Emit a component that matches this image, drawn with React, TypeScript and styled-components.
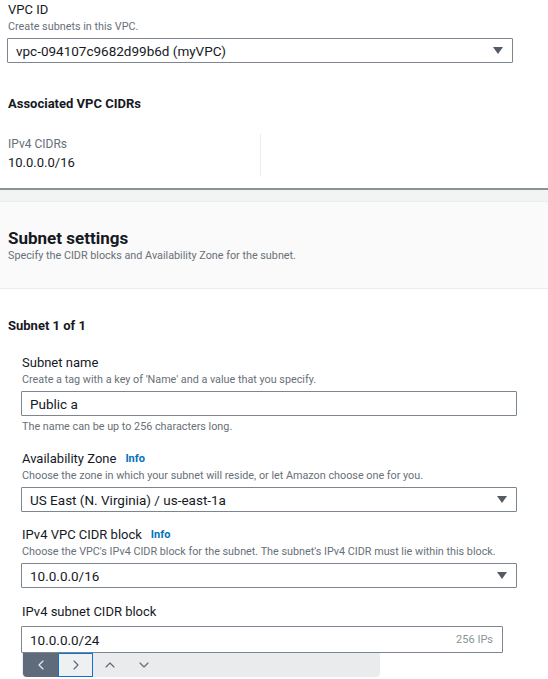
import React from "react";
import styled, { createGlobalStyle } from "styled-components";
import { ChevronLeft, ChevronRight, ChevronUp, ChevronDown } from "lucide-react";

const Global = createGlobalStyle`
  html, body { margin: 0; padding: 0; background: #ffffff; }
  body { font-family: Roboto, "Open Sans", sans-serif; color: #16191f; }
  * { box-sizing: border-box; }
`;

const Page = styled.div`
  width: 548px;
  display: flex;
  flex-direction: column;
`;

const TopSection = styled.section`
  padding: 1px 0 0 8px;
  display: flex;
  flex-direction: column;
`;

const Label = styled.div`
  font-size: 13px;
  line-height: 18px;
  font-weight: 400;
  color: #16191f;
  display: flex;
  align-items: center;
  gap: 9px;
`;

const InfoLink = styled.span`
  font-size: 11px;
  font-weight: 700;
  color: #0073bb;
`;

const Desc = styled.div<{ $top?: number }>`
  font-size: 10.8px;
  line-height: 16px;
  color: #687078;
  margin-top: ${(p) => p.$top ?? 0}px;
`;

const Box = styled.div<{ $width: number; $height: number; $top: number; $shift?: number }>`
  width: ${(p) => p.$width}px;
  height: ${(p) => p.$height}px;
  margin-top: ${(p) => p.$top}px;
  margin-left: ${(p) => p.$shift ?? 0}px;
  border: 1px solid #7d8590;
  border-radius: 1px;
  background: #ffffff;
  display: flex;
  align-items: center;
  justify-content: space-between;
  padding: 0 9px 0 8px;
  font-size: 13.5px;
  color: #16191f;
`;

const Caret = styled.span`
  width: 0;
  height: 0;
  border-left: 5px solid transparent;
  border-right: 5px solid transparent;
  border-top: 7px solid #545b64;
`;

const Hint = styled.span`
  font-size: 11px;
  color: #879596;
`;

const SubHeading = styled.div<{ $top: number }>`
  font-size: 13px;
  line-height: 18px;
  font-weight: 700;
  margin-top: ${(p) => p.$top}px;
`;

const CidrGrid = styled.div`
  display: grid;
  grid-template-columns: 253px 1fr;
  margin-top: 21px;
`;

const CidrCell = styled.div`
  border-right: 1px solid #eaeded;
  padding: 2px 0 4px 0;
  display: flex;
  flex-direction: column;
`;

const KeyLabel = styled.div`
  font-size: 12px;
  line-height: 16px;
  color: #687078;
`;

const Value = styled.div`
  font-size: 13px;
  line-height: 18px;
  margin-top: 2px;
`;

const HeavyRule = styled.div`
  margin-top: 12px;
  height: 2px;
  background: #879596;
`;

const GrayBand = styled.div`
  height: 12px;
  background: #f2f3f3;
  border-bottom: 1px solid #eaeded;
`;

const SettingsHeader = styled.header`
  background: #fafafa;
  border-bottom: 1px solid #eaeded;
  padding: 26px 8px 24px 8px;
`;

const Title = styled.h2`
  margin: 0;
  font-size: 17px;
  line-height: 20px;
  font-weight: 700;
`;

const SubnetBody = styled.section`
  padding: 28px 0 0 8px;
  display: flex;
  flex-direction: column;
`;

const FieldGroup = styled.div`
  padding-left: 14px;
  display: flex;
  flex-direction: column;
`;

const Field = styled.div<{ $top: number }>`
  display: flex;
  flex-direction: column;
  margin-top: ${(p) => p.$top}px;
`;

const Toolbar = styled.div`
  width: 358px;
  height: 24px;
  background: #e9ebed;
  border-radius: 0 0 4px 4px;
  display: flex;
  align-items: stretch;
  padding-left: 1px;
`;

const ToolButton = styled.div<{ $variant?: "dark" | "focus" | "plain" }>`
  width: ${(p) => (p.$variant === "plain" ? 34 : 35)}px;
  display: flex;
  align-items: center;
  justify-content: center;
  background: ${(p) => (p.$variant === "dark" ? "#5f6b7a" : p.$variant === "focus" ? "#eef0f2" : "transparent")};
  border: ${(p) => (p.$variant === "focus" ? "1px solid #0972d3" : "none")};
  color: ${(p) => (p.$variant === "dark" ? "#e9ebed" : "#5f6b7a")};
  border-radius: ${(p) => (p.$variant === "dark" ? "0 0 0 4px" : "0")};
`;

export default function App() {
  return (
    <>
      <Global />
      <Page>
        <TopSection>
          <Label>VPC ID</Label>
          <Desc>Create subnets in this VPC.</Desc>
          <Box $width={506} $height={25} $top={3} $shift={-1}>
            <span>vpc-094107c9682d99b6d (myVPC)</span>
            <Caret />
          </Box>
          <SubHeading $top={32}>Associated VPC CIDRs</SubHeading>
          <CidrGrid>
            <CidrCell>
              <KeyLabel>IPv4 CIDRs</KeyLabel>
              <Value>10.0.0.0/16</Value>
            </CidrCell>
            <div />
          </CidrGrid>
        </TopSection>
        <HeavyRule />
        <GrayBand />
        <SettingsHeader>
          <Title>Subnet settings</Title>
          <Desc>Specify the CIDR blocks and Availability Zone for the subnet.</Desc>
        </SettingsHeader>
        <SubnetBody>
          <SubHeading $top={0}>Subnet 1 of 1</SubHeading>
          <FieldGroup>
            <Field $top={19}>
              <Label>Subnet name</Label>
              <Desc>Create a tag with a key of 'Name' and a value that you specify.</Desc>
              <Box $width={496} $height={25} $top={3} $shift={-1}>
                <span>Public a</span>
              </Box>
              <Desc $top={3}>The name can be up to 256 characters long.</Desc>
            </Field>
            <Field $top={15}>
              <Label>
                Availability Zone <InfoLink>Info</InfoLink>
              </Label>
              <Desc>Choose the zone in which your subnet will reside, or let Amazon choose one for you.</Desc>
              <Box $width={496} $height={25} $top={3} $shift={-1}>
                <span>US East (N. Virginia) / us-east-1a</span>
                <Caret />
              </Box>
            </Field>
            <Field $top={14}>
              <Label>
                IPv4 VPC CIDR block <InfoLink>Info</InfoLink>
              </Label>
              <Desc>Choose the VPC's IPv4 CIDR block for the subnet. The subnet's IPv4 CIDR must lie within this block.</Desc>
              <Box $width={496} $height={25} $top={3} $shift={-1}>
                <span>10.0.0.0/16</span>
                <Caret />
              </Box>
            </Field>
            <Field $top={15}>
              <Label>IPv4 subnet CIDR block</Label>
              <Box $width={482} $height={27} $top={5} $shift={-1}>
                <span>10.0.0.0/24</span>
                <Hint>256 IPs</Hint>
              </Box>
              <Toolbar>
                <ToolButton $variant="dark">
                  <ChevronLeft size={16} strokeWidth={1.75} />
                </ToolButton>
                <ToolButton $variant="focus">
                  <ChevronRight size={16} strokeWidth={1.75} />
                </ToolButton>
                <ToolButton $variant="plain">
                  <ChevronUp size={16} strokeWidth={1.75} />
                </ToolButton>
                <ToolButton $variant="plain">
                  <ChevronDown size={16} strokeWidth={1.75} />
                </ToolButton>
              </Toolbar>
            </Field>
          </FieldGroup>
        </SubnetBody>
      </Page>
    </>
  );
}
